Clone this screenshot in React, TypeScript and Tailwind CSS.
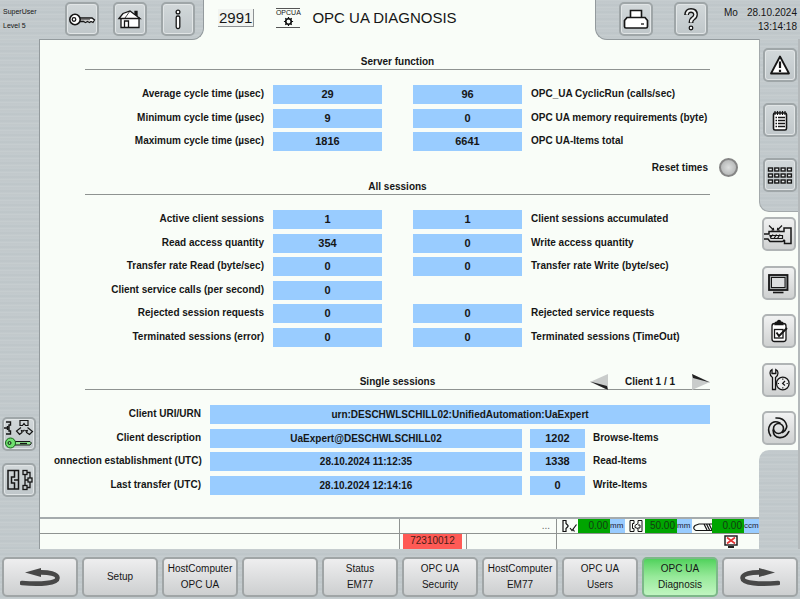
import type { ReactNode } from "react";

const metal =
  "bg-[#c1c8cb] bg-[repeating-linear-gradient(180deg,#c8cfd1_0px,#c0c7ca_2px,#c5cccf_3px,#bdc5c8_5px,#c4cbce_7px)]";

function IconButton({ label, light, children }: { label: string; light?: boolean; children: ReactNode }) {
  return (
    <button
      type="button"
      aria-label={label}
      className={
        light
          ? "size-[34px] shrink-0 rounded-[5px] border-2 border-[#b0b4b5] bg-linear-to-b from-[#f1f2f2] to-[#cfd1d1]"
          : "size-[34px] shrink-0 rounded-[5px] border-2 border-[#9fa6a8] bg-linear-to-b from-[#d2d8da] to-[#c0c7ca] shadow-[inset_0_0_0_1px_#e1e5e6]"
      }
    >
      <svg viewBox="2 2 30 30" className="size-full" fill="none" stroke="#161616" strokeWidth="1.3">
        {children}
      </svg>
    </button>
  );
}

function KeyIcon() {
  return (
    <>
      <path d="M14 16h13l2.500 2-1.500 2.500-2-1-1.500 1-2-1-2 1-2-1H14z" fill="#fff" />
      <circle cx="10" cy="17.500" r="5.200" fill="#fff" strokeWidth="1.600" />
      <circle cx="9" cy="17.500" r="1.800" />
      <path d="M15 17.800h10" strokeWidth=".8" />
    </>
  );
}

function HouseIcon() {
  return (
    <>
      <path d="M22 13V9.500h2V15" fill="#161616" />
      <path d="M8 16v9.500h18V16z" fill="#fff" />
      <path d="M6 16.500 10 11.500 17 9l10 7.500z" fill="#fff" />
      <path d="M17 9l-5 7" strokeWidth=".8" />
      <path d="M11.500 25.500v-6.500h4v6.500" />
    </>
  );
}

function InfoIcon() {
  return (
    <>
      <circle cx="17" cy="10" r="1.900" fill="#fff" />
      <rect x="15.200" y="14" width="3.600" height="12.500" rx="1.500" fill="#fff" />
    </>
  );
}

function PrinterIcon() {
  return (
    <>
      <path d="M11.500 16V8.500h11V16" fill="#fff" strokeWidth="1.600" />
      <path d="M8 15.500h18l2.500 3v6q0 1.500-1.500 1.500H7q-1.500 0-1.500-1.500v-6z" fill="#fff" strokeWidth="1.700" />
      <path d="M22 22h3" />
    </>
  );
}

function HelpIcon() {
  return (
    <>
      <path d="M12.500 13q0-4.500 4.500-4.500t4.500 4q0 2.500-2.500 4-2 1.200-2 4.500" strokeWidth="4.800" />
      <path d="M12.800 12.600q.2-4.100 4.200-4.100t4.500 4q0 2.500-2.500 4-2 1.200-2 4.100" strokeWidth="2.200" stroke="#f0f2f2" />
      <circle cx="17" cy="26" r="1.800" fill="#fff" />
    </>
  );
}

function WarningIcon() {
  return (
    <>
      <path d="M17 8.500 26 25.500H8z" fill="#fff" strokeWidth="1.800" strokeLinejoin="round" />
      <path d="M17 13.500v6.500M17 21.800v2.200" strokeWidth="2.200" />
    </>
  );
}

function NotepadIcon() {
  return (
    <>
      <rect x="10.500" y="10" width="13" height="17" rx="1.500" fill="#fff" strokeWidth="1.600" />
      <path d="M12 8v4M14.500 8v4M17 8v4M19.500 8v4M22 8v4" strokeWidth="1.200" />
      <path d="M12.500 14.500h1.500M15 14.500h7M12.500 17.500h1.500M15 17.500h7M12.500 20.500h1.500M15 20.500h7M12.500 23.500h1.500M15 23.500h7" />
    </>
  );
}

function KeypadIcon() {
  return (
    <>
      {[10, 16, 22].map((y) =>
        [5.5, 11.8, 18.1, 24.4].map((x) => (
          <rect key={`${x}-${y}`} x={x} y={y} width="4" height="3" fill="#e8ebec" strokeWidth="1.400" />
        )),
      )}
    </>
  );
}

function InjectionIcon() {
  return (
    <>
      <path d="M2 17h5v-2.500h15V11h7v15.500h-6.500V23" strokeWidth="1.500" />
      <path d="M2 22h4l2 2.500h12q2 0 2-2" strokeWidth="1.500" />
      <path d="M9 20l2-2.500M12 21.500l2.500-4M15.500 21.500l2.500-4M8 18.500h12.500v3H9z" strokeWidth="1.200" />
      <path d="M7 8.500l4 4M20 8.500l-4 4M9.500 13.200l2.200-.2-.4-2.200M17.800 13.200l-2.400-.1.300-2.300" strokeWidth="1.100" />
    </>
  );
}

function MonitorIcon() {
  return (
    <>
      <rect x="7" y="9" width="18.500" height="15" strokeWidth="1.800" fill="#a3a7a8" />
      <rect x="9.500" y="11.500" width="13.500" height="10" fill="#dcdedf" strokeWidth="1" />
      <path d="M11 26.500h10.500" strokeWidth="1.600" />
    </>
  );
}

function ChecklistIcon() {
  return (
    <>
      <rect x="10" y="9.500" width="14" height="18" rx="2.500" fill="#fff" strokeWidth="1.300" />
      <path d="M13 10.500q0-2.500 2.500-2.500 0-1.500 1.500-1.500t1.500 1.500q2.500 0 2.500 2.500z" fill="#161616" />
      <rect x="12.500" y="15.500" width="8.500" height="8.500" />
      <path d="M14.500 18.500l2.500 3.500 8-8" strokeWidth="1.900" />
    </>
  );
}

function ServiceIcon() {
  return (
    <>
      <path d="M10.500 14.500Q8 13 8 10q0-2.500 2-3.500v4h3.800v-4q2.200 1 2.200 3.500 0 3-2.500 4.500v12h-3z" fill="#eceded" />
      <circle cx="20.800" cy="20.500" r="6.300" fill="#eceded" />
      <path d="M20.800 15.500v1.200M20.800 24.300v1.200M15.800 20.500H17M24.600 20.500h1.200M23 18l-2.400 2.500L23 22.500" strokeWidth="1.200" />
    </>
  );
}

function SwirlIcon() {
  return (
    <g strokeWidth="1.600" strokeLinecap="round">
      <circle cx="16.500" cy="17.500" r="5" />
      {[0, 120, 240].map((angle) => (
        <path key={angle} d="M14 7C23 6.500 29 16 20.500 21.500" transform={`rotate(${angle} 16.500 17.500)`} />
      ))}
    </g>
  );
}

function RobotKeyIcon() {
  return (
    <>
      <path d="M4 5h4.500v3H7v6h1.500v3H4M2 11h4M5.500 9v4" strokeWidth="1.400" />
      <path d="M18 8.500v-5h8v5h-2.500l-1.500-2-1.500 2z" strokeWidth="1.200" />
      <path d="M19 10.500l-4.500 3.500 3 3.500 2.500-2-.5-2 2 .5 1-1.200M25.500 10.500l5 4-3 3-3-2 .8-2-2.300.3" strokeWidth="1.200" />
      <path d="M13 24.500h15l1.500 1.500-1.500 2H13z" fill="#8fe58f" strokeWidth="1" />
      <path d="M18 26.500h7" strokeWidth="1.300" />
      <circle cx="8.500" cy="26" r="5" fill="#6fe06f" stroke="#17661a" strokeWidth="1" />
      <circle cx="7.500" cy="26" r="1.500" strokeWidth="1" />
    </>
  );
}

function ModulesIcon() {
  return (
    <>
      <path d="M6 7.500h10.500V26H6zM12.500 7.500v6.500h-3v6h3v6M12 17h4.500" strokeWidth="1.500" />
      <rect x="21" y="7.500" width="4" height="4" />
      <rect x="26" y="15" width="4" height="4" />
      <rect x="21" y="22.500" width="4" height="4" />
      <path d="M23 11.500v11M23 17h3M25 9.500h3V15M25 24.500h3V19" />
    </>
  );
}

function Cell({ count, children }: { count?: boolean; children: ReactNode }) {
  return (
    <output className={`block h-[19px] bg-[#99ccff] text-center leading-[19px] ${count ? "text-[11px]" : ""}`}>
      {children}
    </output>
  );
}

type Row = [string, string, string?, string?];

const serverRows: Row[] = [
  ["Average cycle time (µsec)", "29", "96", "OPC_UA CyclicRun (calls/sec)"],
  ["Minimum cycle time (µsec)", "9", "0", "OPC UA memory requirements (byte)"],
  ["Maximum cycle time (µsec)", "1816", "6641", "OPC UA-Items total"],
];

const sessionRows: Row[] = [
  ["Active client sessions", "1", "1", "Client sessions accumulated"],
  ["Read access quantity", "354", "0", "Write access quantity"],
  ["Transfer rate Read (byte/sec)", "0", "0", "Transfer rate Write (byte/sec)"],
  ["Client service calls (per second)", "0"],
  ["Rejected session requests", "0", "0", "Rejected service requests"],
  ["Terminated sessions (error)", "0", "0", "Terminated sessions (TimeOut)"],
];

const clientRows: [string, string, string, string][] = [
  ["Client description", "UaExpert@DESCHWLSCHILL02", "1202", "Browse-Items"],
  ["onnection establishment (UTC)", "28.10.2024 11:12:35", "1338", "Read-Items"],
  ["Last transfer (UTC)", "28.10.2024 12:14:16", "0", "Write-Items"],
];

function ValueRows({ rows }: { rows: Row[] }) {
  return (
    <>
      {rows.map(([left, a, b, right]) => (
        <div key={left} className="grid grid-cols-[188px_109px_140px_1fr] leading-[17px] whitespace-nowrap">
          <span className="pr-[9px] text-right">{left}</span>
          <Cell count>{a}</Cell>
          {b !== undefined && (
            <>
              <div className="pl-[31px]"><Cell count>{b}</Cell></div>
              <span className="pl-[9px]">{right}</span>
            </>
          )}
        </div>
      ))}
    </>
  );
}

function Meter({ value, unit, children }: { value: string; unit: string; children: ReactNode }) {
  return (
    <div className="flex h-[14px] items-center leading-[14px]">
      <svg viewBox="0 0 20 14" className="h-[14px] w-5" fill="none" stroke="#111" strokeWidth="1.200">
        {children}
      </svg>
      <span className="w-8 bg-[#00a500] pr-0.5 text-right text-[#123c12]">{value}</span>
      <span className="w-[15px] bg-[#99ccff] text-[8px] text-[#223]">{unit}</span>
    </div>
  );
}

const tabs = [
  ["Setup"],
  ["HostComputer", "OPC UA"],
  [],
  ["Status", "EM77"],
  ["OPC UA", "Security"],
  ["HostComputer", "EM77"],
  ["OPC UA", "Users"],
  ["OPC UA", "Diagnosis"],
];

const tabBase = "flex h-10 flex-col items-center justify-center rounded-[5px] border-2 leading-[16px]";
const tabGray = "border-[#a0a5a6] bg-linear-to-b from-[#eeeeef] to-[#cdcfd0]";
const tabGreen = "border-[#7db889] bg-linear-to-b from-[#4fd25c] via-[#98ea9b] to-[#c0f5c0]";

function TurnArrow({ forward }: { forward?: boolean }) {
  return (
    <svg viewBox="0 0 40 20" className={forward ? "h-5 w-10 -scale-x-100" : "h-5 w-10"} fill="none">
      <path d="M18 5.500C29 5 37.500 7 37.500 11C37.500 16.500 20 17.500 2 16" stroke="#484848" strokeWidth="4.600" strokeLinecap="round" />
      <path d="M5 5.500 21 1v9z" fill="#484848" />
    </svg>
  );
}

export default function App() {
  return (
    <div className="flex min-h-screen flex-col bg-[#f9fdf8] font-['Liberation_Sans',Arial,sans-serif] text-[10px] text-[#161616]">
      <header className="flex h-10">
        <div className={`flex w-[204px] rounded-br-[12px] border-r border-b border-[#939a9d] pt-0.5 ${metal}`}>
          <div className="w-[65px] pt-[3px] pl-[3px] text-[7px] leading-[14px]">
            <div>SuperUser</div>
            <div>Level 5</div>
          </div>
          <div className="flex gap-[14px]">
            <IconButton label="Login"><KeyIcon /></IconButton>
            <IconButton label="Home"><HouseIcon /></IconButton>
            <IconButton label="Information"><InfoIcon /></IconButton>
          </div>
        </div>
        <div className="flex flex-1 items-center pb-1 pl-[14px] text-[15px]">
          <span className="border-r border-b border-[#8d9193] bg-[#f1f4f1] px-px leading-[17px]">2991</span>
          <div className="ml-[22px] flex h-[20px] w-[24px] flex-col items-center border-y border-[#555]">
            <span className="text-[7px] leading-[7px]">OPCUA</span>
            <svg viewBox="0 0 12 12" className="size-[11px]" fill="none" stroke="#111">
              <circle cx="6" cy="6" r="3" strokeWidth="1.800" />
              <path d="M6 1v2M6 9v2M1 6h2M9 6h2M2.500 2.500l1.300 1.300M8.200 8.200l1.300 1.300M9.500 2.500 8.200 3.800M3.800 8.200 2.500 9.500" strokeWidth="1.300" />
            </svg>
          </div>
          <h1 className="ml-3 whitespace-nowrap">OPC UA DIAGNOSIS</h1>
        </div>
        <div className={`flex w-[205px] rounded-bl-[12px] border-b border-l border-[#939a9d] pt-0.5 pl-[23px] ${metal}`}>
          <div className="flex gap-[21px]">
            <IconButton label="Print"><PrinterIcon /></IconButton>
            <IconButton label="Help"><HelpIcon /></IconButton>
          </div>
          <div className="flex flex-1 justify-between pt-1 pr-[3px] pl-4 leading-[14px]">
            <span>Mo</span>
            <div className="text-right">
              <div>28.10.2024</div>
              <div>13:14:18</div>
            </div>
          </div>
        </div>
      </header>

      <div className="flex flex-1">
        <aside className={`relative -mt-px flex w-10 flex-col justify-end gap-3 border-r border-[#939a9d] pb-[52px] pl-0.5 ${metal}`}>
          <IconButton label="Robot release"><RobotKeyIcon /></IconButton>
          <IconButton label="Modules"><ModulesIcon /></IconButton>
        </aside>

        <div className="flex min-w-0 flex-1 flex-col">
          <main className="flex-1 pt-[14px] pr-[49px] pl-[45px] font-bold">
            <section>
              <h2 className="border-b border-[#8f9391] text-center leading-[15px]">Server function</h2>
              <div className="mt-[15px] flex h-[66px] flex-col justify-between">
                <ValueRows rows={serverRows} />
              </div>
              <label className="mt-1.5 -mr-7 flex h-5 items-center justify-end gap-[11px]">
                Reset times
                <input type="radio" className="size-[19px] appearance-none rounded-full border-2 border-[#858585] bg-radial from-[#dcdede] to-[#a9abab]" />
              </label>
            </section>

            <section>
              <h2 className="mt-0.5 border-b border-[#8f9391] text-center leading-[15px]">All sessions</h2>
              <div className="mt-[15px] flex h-[137px] flex-col justify-between">
                <ValueRows rows={sessionRows} />
              </div>
            </section>

            <section>
              <div className="mt-[27px] grid h-4 grid-cols-[1fr_auto_1fr] border-b border-[#8f9391] leading-[15px]">
                <h2 className="col-start-2">Single sessions</h2>
                <div className="flex justify-end gap-[17px]">
                  <button type="button" aria-label="Previous client">
                    <svg viewBox="0 0 18 16" className="h-4 w-[18px]">
                      <path d="M0 8 18 0v16z" fill="#c9cccb" />
                      <path d="M0 7.500 18 16l-1-4z" fill="#222" />
                    </svg>
                  </button>
                  <span>Client 1 / 1</span>
                  <button type="button" aria-label="Next client">
                    <svg viewBox="0 0 18 16" className="h-4 w-[18px]">
                      <path d="M18 8 0 0v16z" fill="#c9cccb" />
                      <path d="M18 8.500 0 0l1 4z" fill="#222" />
                    </svg>
                  </button>
                </div>
              </div>
              <div className="mt-[15px] -ml-[31px] flex h-[90px] flex-col justify-between leading-[17px] whitespace-nowrap">
                <div className="grid grid-cols-[156px_1fr]">
                  <span className="pr-[9px] text-right">Client URI/URN</span>
                  <Cell>urn:DESCHWLSCHILL02:UnifiedAutomation:UaExpert</Cell>
                </div>
                {clientRows.map(([label, value, count, items]) => (
                  <div key={label} className="grid grid-cols-[156px_312px_63px_1fr]">
                    <span className="pr-[9px] text-right">{label}</span>
                    <Cell>{value}</Cell>
                    <div className="pl-2"><Cell count>{count}</Cell></div>
                    <span className="pl-2">{items}</span>
                  </div>
                ))}
              </div>
            </section>
          </main>

          <div className="grid h-8 grid-cols-[359px_157px_1fr] grid-rows-2 border-t-2 border-[#a5abad] leading-[14px]">
            <div className="border-b border-[#8f9391]" />
            <div className="border-b border-l border-[#8f9391] pr-1.5 text-right text-[#666]">...</div>
            <div className="flex border-b border-l border-[#8f9391] pl-px">
              <Meter value="0.00" unit="mm">
                <path d="M5 1.500h3v3l2 2v1l-2 2v3H5zM12 9l2 2.500 4.500-6M15 10.500l1.500 2" />
              </Meter>
              <Meter value="50.00" unit="mm">
                <path d="M5 1.500h4v3H7.500v5H9v3H5zM17 1.500h-4v3l-3 2v2l3 1v3h4zM13 6h2v3h-2" strokeWidth="1" />
              </Meter>
              <Meter value="0.00" unit="ccm">
                <path d="M3 6.500 7 5h13M7 11.500h13M3 6.500q-3 3 1 5h4M12 5l3 6M14.500 5l3 6M17 5l3 6" />
              </Meter>
            </div>
            <div />
            <div className="flex border-l border-[#8f9391] pl-[3px]">
              <span className="w-[59px] bg-[#ff5a55] text-center text-[#4a1d16]">72310012</span>
              <span className="ml-1 border-l border-[#8f9391]" />
            </div>
            <div className="border-l border-[#8f9391] pt-px pl-[167px]">
              <svg viewBox="0 0 14 13" className="h-[13px] w-[14px]" fill="none" stroke="#222">
                <rect x="1" y="1" width="12" height="9" fill="#fff" strokeWidth="1.500" />
                <path d="M3 2.500l8 6M11 2.500l-8 6" stroke="#e23434" strokeWidth="1.600" />
                <path d="M4 12h6" strokeWidth="2" />
              </svg>
            </div>
          </div>
        </div>

        <aside className="relative -mt-px flex w-[41px] flex-col border-r-2 border-[#b4b9bb]">
          <div className={`flex h-[173px] flex-col gap-[21px] rounded-bl-[10px] border-b border-l border-[#a3a9ab] pt-[9px] pl-[3px] ${metal}`}>
            <IconButton label="Alarms"><WarningIcon /></IconButton>
            <IconButton label="Protocol"><NotepadIcon /></IconButton>
            <IconButton label="Overview"><KeypadIcon /></IconButton>
          </div>
          <div className="flex flex-1 flex-col justify-between py-[5px] pl-[3px]">
            <IconButton light label="Injection unit"><InjectionIcon /></IconButton>
            <IconButton light label="Screen"><MonitorIcon /></IconButton>
            <IconButton light label="Checklist"><ChecklistIcon /></IconButton>
            <IconButton light label="Service times"><ServiceIcon /></IconButton>
            <IconButton light label="Cycle"><SwirlIcon /></IconButton>
          </div>
          <div className={`h-[99px] rounded-tl-[10px] ${metal}`} />
        </aside>
      </div>

      <nav className={`grid grid-cols-10 gap-1 px-0.5 pt-2 pb-0.5 ${metal}`}>
        <button type="button" aria-label="Back" className={`${tabBase} ${tabGray}`}><TurnArrow /></button>
        {tabs.map((lines, i) => (
          <button
            key={i}
            type="button"
            aria-label={lines.length ? undefined : "Unassigned"}
            className={`${tabBase} ${i === 7 ? tabGreen : tabGray}`}
          >
            {lines.map((line) => (
              <span key={line}>{line}</span>
            ))}
          </button>
        ))}
        <button type="button" aria-label="Forward" className={`${tabBase} ${tabGray}`}><TurnArrow forward /></button>
      </nav>
    </div>
  );
}
